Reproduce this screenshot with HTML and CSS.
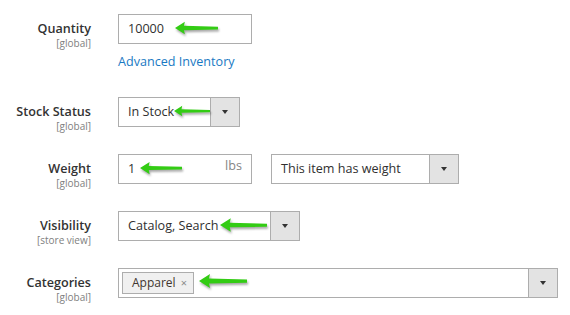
FILE: index.html
```html
<!DOCTYPE html>
<html>
<head>
  <meta charset="utf-8">
  <link rel="stylesheet" href="styles.css">
</head>
<body>
  <div class="form">
    <div class="row row-qty">
      <div class="label">Quantity<span class="scope">[global]</span></div>
      <div class="control">
        <div class="field">
          <div class="input w-134">10000</div>
          <svg class="arrow" style="left:57px;width:43px" viewBox="0 0 48 14"><polygon points="0,7 11,0 10,4.6 48,5.6 48,8.8 10,9.4 11,14"/></svg>
        </div>
        <a class="link" href="#">Advanced Inventory</a>
      </div>
    </div>

    <div class="row">
      <div class="label">Stock Status<span class="scope">[global]</span></div>
      <div class="control">
        <div class="field">
          <div class="select w-122"><span class="value">In Stock</span><span class="btn"></span></div>
          <svg class="arrow" style="left:56px;width:36px" viewBox="0 0 48 14"><polygon points="0,7 11,0 10,4.6 48,5.6 48,8.8 10,9.4 11,14"/></svg>
        </div>
      </div>
    </div>

    <div class="row">
      <div class="label">Weight<span class="scope">[global]</span></div>
      <div class="control inline">
        <div class="field">
          <div class="input w-134 addon"><span>1</span><span class="unit">lbs</span></div>
          <svg class="arrow" style="left:22px;width:42px" viewBox="0 0 48 14"><polygon points="0,7 11,0 10,4.6 48,5.6 48,8.8 10,9.4 11,14"/></svg>
        </div>
        <div class="select w-188"><span class="value">This item has weight</span><span class="btn"></span></div>
      </div>
    </div>

    <div class="row">
      <div class="label">Visibility<span class="scope">[store view]</span></div>
      <div class="control">
        <div class="field">
          <div class="select w-182"><span class="value">Catalog, Search</span><span class="btn"></span></div>
          <svg class="arrow" style="left:102px;width:47px" viewBox="0 0 48 14"><polygon points="0,7 11,0 10,4.6 48,5.6 48,8.8 10,9.4 11,14"/></svg>
        </div>
      </div>
    </div>

    <div class="row">
      <div class="label">Categories<span class="scope">[global]</span></div>
      <div class="control">
        <div class="field">
          <div class="select w-440 multi"><span class="value"><span class="tag">Apparel <span class="x">&times;</span></span></span><span class="btn"></span></div>
          <svg class="arrow" style="left:81px;width:48px;top:6px" viewBox="0 0 48 14"><polygon points="0,7 11,0 10,4.6 48,5.6 48,8.8 10,9.4 11,14"/></svg>
        </div>
      </div>
    </div>
  </div>
</body>
</html>
```

FILE: styles.css
```css
html, body {
  margin: 0;
  padding: 0;
  background: #fff;
  font-family: "Open Sans", "Liberation Sans", sans-serif;
  color: #303030;
}

.form {
  padding-top: 14px;
}

.row {
  display: grid;
  grid-template-columns: 91px auto;
  column-gap: 27px;
  margin-bottom: 27px;
}

.row-qty {
  margin-bottom: 25px;
}

.label {
  box-sizing: border-box;
  height: 30px;
  text-align: right;
  font-size: 12.6px;
  font-weight: 600;
  line-height: 17px;
  padding-top: 6px;
  color: #333;
  white-space: nowrap;
}

.scope {
  display: block;
  font-size: 10px;
  font-weight: 400;
  line-height: 12px;
  color: #808080;
}

.control {
  display: flex;
  flex-direction: column;
  align-items: flex-start;
}

.control.inline {
  flex-direction: row;
  gap: 19px;
}

.field {
  position: relative;
}

.input, .select {
  box-sizing: border-box;
  height: 30px;
  border: 1px solid #adadad;
  font-size: 12.6px;
  line-height: 28px;
  background: #fff;
}

.input {
  padding: 0 9px;
}

.addon {
  display: flex;
  justify-content: space-between;
}

.unit {
  color: #858585;
  line-height: 22px;
}

.select {
  display: flex;
}

.select .value {
  flex: 1;
  padding-left: 9px;
  white-space: nowrap;
}

.btn {
  width: 28px;
  background: #e3e3e3;
  border-left: 1px solid #adadad;
  position: relative;
}

.btn::after {
  content: "";
  position: absolute;
  left: 11px;
  top: 12px;
  border-left: 3px solid transparent;
  border-right: 3px solid transparent;
  border-top: 4px solid #333;
}

.w-134 { width: 134px; }
.w-122 { width: 122px; }
.w-188 { width: 188px; }
.w-182 { width: 182px; }
.w-440 { width: 440px; }

.multi .value {
  padding-left: 3px;
  padding-top: 3px;
}

.tag {
  display: inline-block;
  box-sizing: border-box;
  height: 22px;
  line-height: 20px;
  padding: 0 6px 0 9px;
  border: 1px solid #adadad;
  background: #f0f0f0;
  font-size: 12px;
  color: #41362f;
  vertical-align: top;
}

.tag .x {
  color: #8a8a8a;
  font-size: 11px;
  margin-left: 2px;
}

.link {
  margin-top: 8px;
  font-size: 12.6px;
  line-height: 20px;
  color: #1979c3;
  text-decoration: none;
}

.arrow {
  position: absolute;
  top: 7px;
  height: 14px;
  fill: #33cc14;
  filter: drop-shadow(1px 2px 1px rgba(0, 0, 0, 0.35));
}
```
